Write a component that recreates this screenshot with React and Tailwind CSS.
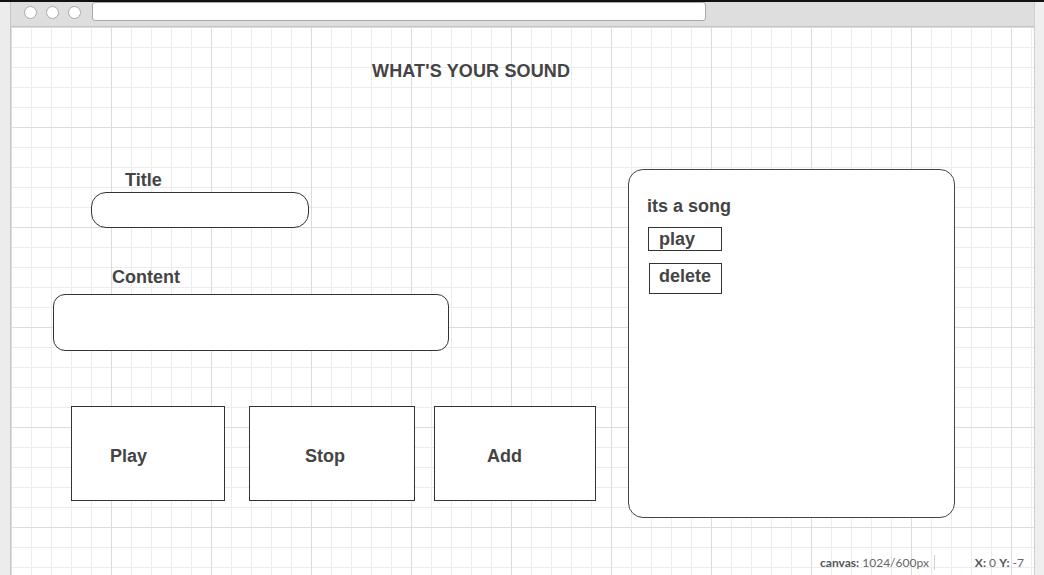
export default function App() {
  return (
    <div className="h-[575px] w-[1044px] overflow-hidden flex flex-col bg-[#ececec] font-['Liberation_Sans',Arial,sans-serif] text-[#444]">
      <div className="h-[2px] bg-[#111] shrink-0" />
      <div className="flex flex-1 min-h-0">
        <div className="w-[11px] shrink-0 bg-[#ececec] border-r border-[#c6c6c6]" />

        <div className="flex-1 flex flex-col min-w-0">
          {/* browser chrome */}
          <div className="h-[25px] shrink-0 bg-[#dedede] border-b border-[#c4c4c4] flex items-center">
            <div className="flex gap-[9px] ml-[13px] -mt-[4px]">
              <span className="w-[13px] h-[13px] rounded-full bg-white border border-[#a9a9a9]" />
              <span className="w-[13px] h-[13px] rounded-full bg-white border border-[#a9a9a9]" />
              <span className="w-[13px] h-[13px] rounded-full bg-white border border-[#a9a9a9]" />
            </div>
            <div className="ml-[11px] -mt-[5px] w-[614px] h-[19px] bg-white border border-[#a9a9a9] rounded-[3px]" />
          </div>

          {/* canvas */}
          <div className="relative flex-1 bg-white bg-[linear-gradient(to_right,#dcdcdc_1px,transparent_1px),linear-gradient(to_bottom,#dcdcdc_1px,transparent_1px),linear-gradient(to_right,#ececec_1px,transparent_1px),linear-gradient(to_bottom,#ececec_1px,transparent_1px)] bg-size-[100px_100px,100px_100px,20px_20px,20px_20px]">
            <h1 className="mt-[34px] ml-[361px] text-[18px] leading-[20px] font-bold tracking-[0.15px]">WHAT'S YOUR SOUND</h1>

            <div className="flex mt-[88px]">
              <div className="w-[617px] shrink-0">
                <div className="mt-[1px] ml-[114px] text-[18px] leading-[20px] font-bold">Title</div>
                <div className="mt-[2px] ml-[80px] w-[218px] h-[36px] bg-white border border-[#333] rounded-[15px]" />

                <div className="mt-[39px] ml-[101px] text-[18px] leading-[20px] font-bold">Content</div>
                <div className="mt-[7px] ml-[42px] w-[396px] h-[57px] bg-white border border-[#333] rounded-[12px]" />

                <div className="mt-[55px] ml-[60px] flex">
                  <div className="w-[154px] h-[95px] bg-white border border-[#333] pt-[39px] pl-[38px] text-[18px] leading-[20px] font-bold">Play</div>
                  <div className="ml-[24px] w-[166px] h-[95px] bg-white border border-[#333] pt-[39px] pl-[55px] text-[18px] leading-[20px] font-bold">Stop</div>
                  <div className="ml-[19px] w-[162px] h-[95px] bg-white border border-[#333] pt-[39px] pl-[52px] text-[18px] leading-[20px] font-bold">Add</div>
                </div>
              </div>

              <div className="w-[327px] h-[349px] shrink-0 bg-white border border-[#444] rounded-[15px] pt-[26px] pl-[18px]">
                <div className="text-[18px] leading-[20px] font-bold">its a song</div>
                <div className="mt-[11px] ml-[1px] w-[74px] h-[24px] border border-[#333] pl-[10px] pt-[1px] text-[18px] leading-[20px] font-bold">play</div>
                <div className="mt-[12px] ml-[2px] w-[73px] h-[31px] border border-[#333] pl-[9px] pt-[2px] text-[18px] leading-[20px] font-bold">delete</div>
              </div>
            </div>

            {/* status bar */}
            <div className="absolute right-[10px] bottom-[5px] flex items-center font-['Lato',sans-serif] text-[12px] leading-[15px] text-[#555]">
              <span className="pr-[5px] border-r border-[#cfcfcf]">
                <b>canvas:</b> <span className="text-[#666]">1024/600px</span>
              </span>
              <span className="ml-[40px]">
                <b>X:</b> <span className="text-[#666]">0</span> <b>Y:</b> <span className="text-[#666]">-7</span>
              </span>
            </div>
          </div>
        </div>

        <div className="w-[10px] shrink-0 bg-[#efefef] border-l border-[#cfcfcf]" />
      </div>
    </div>
  )
}
